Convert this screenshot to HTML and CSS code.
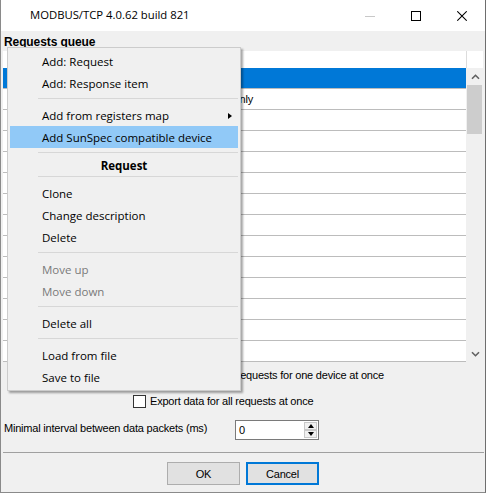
FILE: index.html
```html
<!DOCTYPE html>
<html>
<head>
<meta charset="utf-8">
<link rel="stylesheet" href="styles.css">
</head>
<body>
<div class="window">
  <div class="titlebar">
    <span class="title">MODBUS/TCP 4.0.62 build 821</span>
    <div class="controls">
      <span class="ctl"><svg width="10" height="10" viewBox="0 0 10 10"><line x1="0" y1="5.5" x2="10" y2="5.5" stroke="#c8c8c8" stroke-width="1"/></svg></span>
      <span class="ctl"><svg width="10" height="10" viewBox="0 0 10 10"><rect x="0.5" y="0.5" width="9" height="9" fill="none" stroke="#000" stroke-width="1"/></svg></span>
      <span class="ctl"><svg width="10" height="10" viewBox="0 0 10 10"><path d="M0.3 0.3 L9.7 9.7 M9.7 0.3 L0.3 9.7" stroke="#000" stroke-width="1.05"/></svg></span>
    </div>
  </div>
  <div class="client">
    <div class="group-label">Requests queue</div>
    <div class="grid">
      <div class="cells">
        <div class="hdr"></div>
        <div class="row sel"></div>
        <div class="row"><span class="cell-text">Read only</span></div>
        <div class="row"></div>
        <div class="row"></div>
        <div class="row"></div>
        <div class="row"></div>
        <div class="row"></div>
        <div class="row"></div>
        <div class="row"></div>
        <div class="row"></div>
        <div class="row"></div>
        <div class="row"></div>
        <div class="row"></div>
        <div class="row"></div>
      </div>
      <div class="vscroll">
        <div class="hdr side"></div>
        <div class="track">
          <div class="arrow"><svg width="9" height="6" viewBox="0 0 9 6"><path d="M1 4.8 L4.5 1.3 L8 4.8" fill="none" stroke="#606060" stroke-width="1.6"/></svg></div>
          <div class="thumb"></div>
          <div class="track-fill"></div>
          <div class="arrow"><svg width="9" height="6" viewBox="0 0 9 6"><path d="M1 1.2 L4.5 4.7 L8 1.2" fill="none" stroke="#606060" stroke-width="1.6"/></svg></div>
        </div>
      </div>
    </div>
    <div class="opt opt1">
      <span class="check"></span>
      <span class="opt-text">Export data for all requests for one device at once</span>
    </div>
    <div class="opt opt2">
      <span class="check"></span>
      <span class="opt-text">Export data for all requests at once</span>
    </div>
    <div class="interval">
      <span class="interval-label">Minimal interval between data packets (ms)</span>
      <div class="spin">
        <span class="spin-value">0</span>
        <div class="spin-btns">
          <span class="spin-btn"><span class="tri-up"></span></span>
          <span class="spin-btn"><span class="tri-down"></span></span>
        </div>
      </div>
    </div>
    <div class="hsep"></div>
    <div class="buttons">
      <span class="btn">OK</span>
      <span class="btn default">Cancel</span>
    </div>
  </div>

  <div class="menu">
    <div class="mi">Add: Request</div>
    <div class="mi">Add: Response item</div>
    <div class="msep"></div>
    <div class="mi sub">Add from registers map<span class="subarrow"></span></div>
    <div class="mi hot">Add SunSpec compatible device</div>
    <div class="msep"></div>
    <div class="mhead">Request</div>
    <div class="msep"></div>
    <div class="mi">Clone</div>
    <div class="mi">Change description</div>
    <div class="mi">Delete</div>
    <div class="msep"></div>
    <div class="mi dis">Move up</div>
    <div class="mi dis">Move down</div>
    <div class="msep"></div>
    <div class="mi">Delete all</div>
    <div class="msep"></div>
    <div class="mi">Load from file</div>
    <div class="mi">Save to file</div>
  </div>
</div>
</body>
</html>
```

FILE: styles.css
```css
* { box-sizing: border-box; }
html, body { margin: 0; padding: 0; }
body {
  width: 486px;
  height: 493px;
  overflow: hidden;
  background: #fff;
  font-family: "Liberation Sans", Arial, sans-serif;
  font-size: 11px;
  letter-spacing: -0.2px;
  color: #000;
}
.window {
  position: relative;
  width: 486px;
  height: 493px;
  border-left: 1px solid #8a8a8a;
  border-right: 1px solid #6e6e6e;
  border-bottom: 1px solid #8a8a8a;
  background: #f0f0f0;
  display: flex;
  flex-direction: column;
}
.titlebar {
  height: 31px;
  flex: none;
  background: #fff;
  display: flex;
}
.title {
  flex: 1;
  font-family: "Open Sans", sans-serif;
  font-size: 11.3px;
  letter-spacing: 0;
  padding-left: 29px;
  line-height: 30px;
}
.controls { display: flex; }
.ctl {
  width: 46px;
  display: flex;
  align-items: center;
  justify-content: center;
}
.ctl svg { display: block; }
.client {
  flex: 1;
  display: flex;
  flex-direction: column;
}
.group-label {
  height: 20px;
  padding: 2px 0 0 3px;
  line-height: 18px;
  font-weight: bold;
  font-size: 12px;
  letter-spacing: -0.1px;
}
.grid {
  margin-left: 2px;
  width: 480px;
  height: 311px;
  display: flex;
  background: #fff;
}
.cells { width: 463px; }
.hdr { height: 17px; background: #fff; }
.row {
  height: 21px;
  border-bottom: 1px solid #bcbcbc;
  background: #fff;
}
.row.sel { background: #0078d7; }
.cell-text {
  display: block;
  width: 250px;
  text-align: right;
  line-height: 20px;
  white-space: nowrap;
}
.vscroll {
  width: 17px;
  display: flex;
  flex-direction: column;
}
.hdr.side { border-left: 1px solid #dcdcdc; }
.track {
  flex: 1;
  display: flex;
  flex-direction: column;
  background: #f0f0f0;
  padding-left: 1px;
}
.arrow {
  height: 17px;
  display: flex;
  align-items: center;
  justify-content: center;
}
.arrow svg { display: block; }
.thumb {
  height: 49px;
  width: 15px;
  background: #cdcdcd;
}
.track-fill { flex: 1; }
.opt {
  display: flex;
  align-items: center;
  height: 16px;
}
.opt1 {
  margin-top: 5px;
  width: 383px;
  justify-content: flex-end;
}
.opt2 {
  margin-top: 10px;
  padding-left: 132px;
}
.check {
  width: 13px;
  height: 13px;
  border: 1px solid #333;
  background: #fff;
  margin-right: 4px;
  flex: none;
}
.opt-text { line-height: 16px; white-space: nowrap; }
.interval {
  margin-top: 11px;
  height: 20px;
  display: flex;
  align-items: flex-start;
  padding-left: 3px;
}
.interval-label {
  width: 231px;
  line-height: 16px;
  white-space: nowrap;
}
.spin {
  width: 84px;
  height: 20px;
  border: 1px solid #7a7a7a;
  background: #fff;
  display: flex;
  align-items: center;
  justify-content: space-between;
  padding: 0 1px 0 3px;
}
.spin-value { line-height: 18px; }
.spin-btns {
  display: flex;
  flex-direction: column;
}
.spin-btn {
  width: 13px;
  height: 8px;
  border: 1px solid #c8c8c8;
  background: #f0f0f0;
  display: flex;
  align-items: center;
  justify-content: center;
}
.tri-up {
  width: 0; height: 0;
  border-left: 3.5px solid transparent;
  border-right: 3.5px solid transparent;
  border-bottom: 4px solid #000;
}
.tri-down {
  width: 0; height: 0;
  border-left: 3.5px solid transparent;
  border-right: 3.5px solid transparent;
  border-top: 4px solid #000;
}
.hsep {
  margin: 12px 1px 0 2px;
  height: 1px;
  background: #a0a0a0;
}
.buttons {
  margin-top: 9px;
  padding-left: 166px;
  display: flex;
  gap: 6px;
}
.btn {
  width: 73px;
  height: 23px;
  border: 1px solid #adadad;
  background: #e1e1e1;
  display: flex;
  align-items: center;
  justify-content: center;
}
.btn.default { border: 2px solid #0078d7; }

.menu {
  position: absolute;
  left: 6px;
  top: 47px;
  width: 234px;
  border: 1px solid #cccccc;
  background: #f0f0f0;
  padding: 2px;
  box-shadow: 2px 2px 2px rgba(0,0,0,0.35);
  font-family: "Open Sans", sans-serif;
  font-size: 11.5px;
  letter-spacing: 0;
}
.mi {
  height: 22px;
  line-height: 21px;
  padding-top: 1px;
  padding-left: 32px;
  white-space: nowrap;
}
.mi.sub {
  display: flex;
  align-items: center;
  justify-content: space-between;
  padding-right: 6px;
}
.subarrow {
  width: 0; height: 0;
  border-top: 3.5px solid transparent;
  border-bottom: 3.5px solid transparent;
  border-left: 4px solid #000;
}
.mi.hot { background: #91c9f7; }
.mi.dis { color: #7a7a7a; }
.msep {
  height: 10px;
  padding: 4px 0 0 28px;
}
.msep::after {
  content: "";
  display: block;
  height: 1px;
  background: #d7d7d7;
}
.mhead {
  height: 14px;
  line-height: 15px;
  text-align: center;
  font-weight: bold;
}
```
